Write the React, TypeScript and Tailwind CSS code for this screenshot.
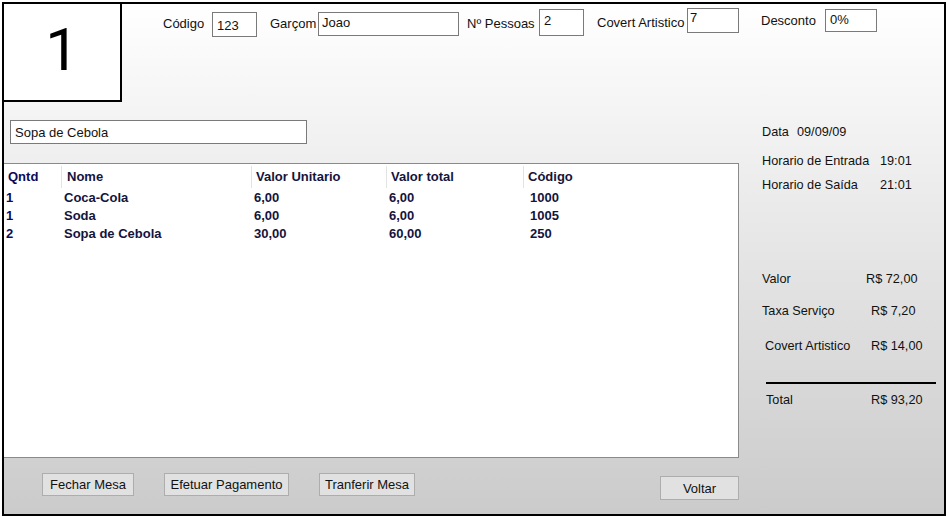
import React from "react";

type Item = { qntd: string; nome: string; unit: string; total: string; codigo: string };

const items: Item[] = [
    { qntd: "1", nome: "Coca-Cola", unit: "6,00", total: "6,00", codigo: "1000" },
    { qntd: "1", nome: "Soda", unit: "6,00", total: "6,00", codigo: "1005" },
    { qntd: "2", nome: "Sopa de Cebola", unit: "30,00", total: "60,00", codigo: "250" },
];

function Btn({ label, className }: { label: string; className: string }) {
    return (
        <div className={`flex items-center justify-center bg-[#e1e1e1] border border-[#adadad] text-[13px] text-[#111] ${className}`}>
            {label}
        </div>
    );
}

export default function App() {
    return (
        <div className="w-[949px] h-[517px] pt-[2px] pl-[2px] bg-white font-['Liberation_Sans',Arial,sans-serif]">
            <div className="w-[944px] h-[514px] border-2 border-black flex flex-col bg-gradient-to-b from-[#ffffff] to-[#cbcbcb] overflow-hidden text-[13px] leading-[16px] text-[#111]">
                {/* top row */}
                <div className="flex items-start h-[98px] shrink-0">
                    <div className="w-[118px] h-[98px] bg-white border-r-2 border-b-2 border-black flex items-center justify-center font-['Roboto',sans-serif] text-[60px] leading-none pb-[4px] text-black">
                        1
                    </div>
                    <div className="flex items-start">
                        <span className="ml-[41px] w-[49px] mt-[12px]">Código</span>
                        <div className="w-[45px] h-[25px] mt-[8px] bg-white border border-[#7a7a7a] pl-[4px] pt-[5px]">123</div>
                        <span className="ml-[13px] w-[48px] mt-[12px]">Garçom</span>
                        <div className="w-[141px] h-[24px] mt-[8px] bg-white border border-[#7a7a7a] pl-[3px] pt-[2px]">Joao</div>
                        <span className="ml-[8px] w-[72px] mt-[12px]">Nº Pessoas</span>
                        <div className="w-[45px] h-[27px] mt-[5px] bg-white border border-[#7a7a7a] pl-[4px] pt-[3px]">2</div>
                        <span className="ml-[13px] w-[90px] mt-[11px] whitespace-nowrap">Covert Artistico</span>
                        <div className="w-[52px] h-[25px] mt-[4px] bg-white border border-[#7a7a7a] pl-[2px] pt-[1px]">7</div>
                        <span className="ml-[22px] w-[64px] mt-[9px]">Desconto</span>
                        <div className="w-[52px] h-[23px] mt-[5px] bg-white border border-[#7a7a7a] pl-[4px] pt-[2px]">0%</div>
                    </div>
                </div>

                <div className="flex flex-1">
                    {/* left column */}
                    <div className="w-[735px] flex flex-col shrink-0">
                        <div className="ml-[6px] mt-[18px] w-[297px] h-[24px] bg-white border border-[#7a7a7a] pl-[4px] pt-[4px]">
                            Sopa de Cebola
                        </div>
                        <div className="mt-[19px] h-[295px] bg-white border-t border-r border-b border-[#8a8a8a] font-bold text-[#14143c]">
                            <div className="flex h-[24px] items-center pt-[2px]">
                                <div className="w-[57px] pl-[4px] text-[#0a0a5a]">Qntd</div>
                                <div className="w-[190px] pl-[5px] border-l border-[#e3e3e3] h-full flex items-center">Nome</div>
                                <div className="w-[135px] pl-[4px] border-l border-[#e3e3e3] h-full flex items-center">Valor Unitario</div>
                                <div className="w-[137px] pl-[4px] border-l border-[#e3e3e3] h-full flex items-center">Valor total</div>
                                <div className="flex-1 pl-[4px] border-l border-[#e3e3e3] h-full flex items-center">Código</div>
                            </div>
                            <div className="pt-[1px]">
                                {items.map((it) => (
                                    <div key={it.codigo} className="flex h-[18px] items-center">
                                        <div className="w-[57px] pl-[2px] text-[#0a0a5a]">{it.qntd}</div>
                                        <div className="w-[190px] pl-[3px]">{it.nome}</div>
                                        <div className="w-[135px] pl-[3px]">{it.unit}</div>
                                        <div className="w-[137px] pl-[3px]">{it.total}</div>
                                        <div className="flex-1 pl-[7px]">{it.codigo}</div>
                                    </div>
                                ))}
                            </div>
                        </div>
                        <div className="flex items-start mt-[15px]">
                            <Btn label="Fechar Mesa" className="ml-[38px] w-[92px] h-[23px] pt-[1px]" />
                            <Btn label="Efetuar Pagamento" className="ml-[30px] w-[125px] h-[23px] pt-[1px]" />
                            <Btn label="Tranferir Mesa" className="ml-[30px] w-[96px] h-[23px] pt-[1px]" />
                            <Btn label="Voltar" className="ml-[245px] mt-[3px] w-[79px] h-[24px] pt-[1px]" />
                        </div>
                    </div>

                    {/* right column */}
                    <div className="flex flex-col pl-[23px] text-[12.7px] whitespace-nowrap">
                        <div className="mt-[22px] flex">
                            <span className="w-[35px]">Data</span>
                            <span>09/09/09</span>
                        </div>
                        <div className="mt-[13px] flex">
                            <span className="w-[118px]">Horario de Entrada</span>
                            <span>19:01</span>
                        </div>
                        <div className="mt-[8px] flex">
                            <span className="w-[118px]">Horario de Saída</span>
                            <span>21:01</span>
                        </div>
                        <div className="mt-[78px] flex">
                            <span className="w-[104px]">Valor</span>
                            <span>R$ 72,00</span>
                        </div>
                        <div className="mt-[16px] flex">
                            <span className="w-[109px]">Taxa Serviço</span>
                            <span>R$ 7,20</span>
                        </div>
                        <div className="mt-[19px] flex pl-[3px]">
                            <span className="w-[106px]">Covert Artistico</span>
                            <span>R$ 14,00</span>
                        </div>
                        <div className="mt-[28px] ml-[4px] w-[170px] h-[2px] bg-black" />
                        <div className="mt-[8px] flex pl-[4px]">
                            <span className="w-[105px]">Total</span>
                            <span>R$ 93,20</span>
                        </div>
                    </div>
                </div>
            </div>
        </div>
    );
}
